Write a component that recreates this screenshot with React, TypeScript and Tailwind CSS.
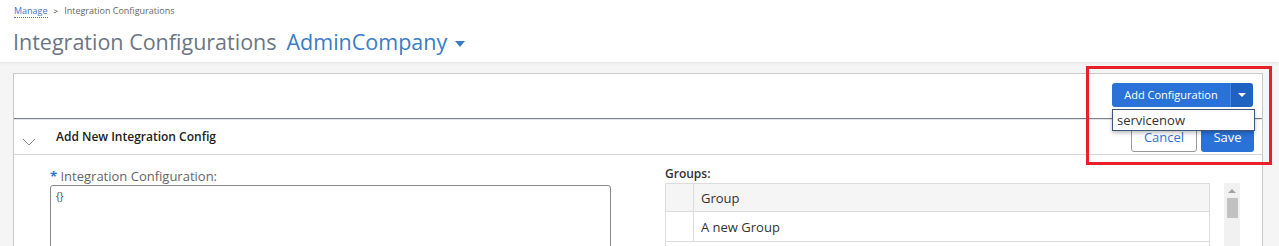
const font = { fontFamily: '"Open Sans", "Liberation Sans", sans-serif' };

const SplitButton = () => {
  return (
    <div className="relative">
      <div className="flex h-[24px] rounded-[3px] overflow-hidden">
        <button className="bg-[#2a72d8] text-white text-[11px] w-[118px] leading-[24px]">
          Add Configuration
        </button>
        <button className="bg-[#1f62c1] w-[23px] flex items-center justify-center border-l border-[#4a86dc]">
          <span className="w-0 h-0 border-l-[4px] border-r-[4px] border-t-[4px] border-l-transparent border-r-transparent border-t-white" />
        </button>
      </div>
      <div className="absolute left-0 top-[26px] w-[143px] h-[22px] bg-white border border-[#3d5778] shadow-[0_2px_4px_rgba(0,0,0,0.25)] text-[13px] text-[#333] pl-[4px] leading-[20px] z-10">
        servicenow
      </div>
    </div>
  );
};

const App = () => {
  return (
    <div className="w-[1279px] h-[246px] overflow-hidden bg-white relative" style={font}>
      <header className="h-[62px] px-[14px] pt-[4px] bg-white shadow-[0_1px_3px_rgba(0,0,0,0.08)] relative z-[1]">
        <div className="flex items-center gap-[6px] text-[9px] h-[14px]">
          <a className="text-[#4a73c9] border-b border-dotted border-[#4a73c9] leading-[12px]">Manage</a>
          <span className="text-[#222] text-[8px]">&gt;</span>
          <span className="text-[#666]">Integration Configurations</span>
        </div>
        <div className="flex items-center mt-[11px] h-[26px]">
          <h1 className="text-[21.5px] text-[#6c7683] leading-[26px] -ml-[1px]">Integration Configurations</h1>
          <span className="text-[21.5px] text-[#3a7cc6] leading-[26px] ml-[10px]">AdminCompany</span>
          <span className="ml-[8px] mt-[4px] w-0 h-0 border-l-[5px] border-r-[5px] border-t-[6px] border-l-transparent border-r-transparent border-t-[#3a7cc6]" />
        </div>
      </header>

      <main className="bg-[#f5f5f5] h-[184px] pl-[13px] pr-[16px] pt-[11px]">
        <div className="bg-white border border-[#c9c9c9] h-[200px]">
          <div className="h-[45px] flex justify-end pt-[9px] pr-[9px] border-b border-[#76828f]">
            <SplitButton />
          </div>
          <div className="h-[36px] flex items-center border-b border-[#d6d6d6] border-t border-t-[#e4e4e4] pr-[8px]">
            <svg className="ml-[8px] mt-[10px]" width="14" height="8" viewBox="0 0 14 8" fill="none">
              <path d="M1 1 L7 7 L13 1" stroke="#8a8a8a" strokeWidth="1" />
            </svg>
            <span className="ml-[20px] text-[12px] font-semibold text-[#222]">Add New Integration Config</span>
            <div className="ml-auto flex gap-[4px] mt-[2px]">
              <button className="h-[28px] w-[66px] border border-[#999] rounded-[3px] text-[13px] text-[#2a72d8] bg-white">
                Cancel
              </button>
              <button className="h-[28px] w-[53px] rounded-[3px] text-[13px] text-white bg-[#2a72d8]">Save</button>
            </div>
          </div>
          <div className="flex pt-[13px]">
            <div className="ml-[36px] w-[561px]">
              <label className="block text-[13px] text-[#666] leading-[16px]">
                <span className="text-[#2a72d8] font-bold">*</span> Integration Configuration:
              </label>
              <div className="mt-[1px] h-[80px] border border-[#8a8a8a] rounded-[3px] px-[5px] pt-[3px] text-[10px] text-[#444]">
                {'{}'}
              </div>
            </div>
            <div className="ml-[54px] flex flex-col -mt-[2px]">
              <span className="text-[12px] font-semibold text-[#333] leading-[16px]">Groups:</span>
              <div className="flex mt-[1px]">
                <div className="w-[545px] border border-[#dcdcdc] text-[13px] text-[#333]">
                  <div className="flex h-[28px] bg-[#f5f5f5] border-b border-[#dcdcdc]">
                    <div className="w-[28px] border-r border-[#dcdcdc]" />
                    <div className="pl-[7px] leading-[28px]">Group</div>
                  </div>
                  <div className="flex h-[30px] border-b border-[#dcdcdc]">
                    <div className="w-[28px] border-r border-[#dcdcdc]" />
                    <div className="pl-[7px] leading-[30px]">A new Group</div>
                  </div>
                </div>
                <div className="ml-[14px] w-[16px] h-[80px] bg-[#f1f1f1] flex flex-col items-center pt-[6px]">
                  <span className="w-0 h-0 border-l-[4px] border-r-[4px] border-b-[4px] border-l-transparent border-r-transparent border-b-[#a3a3a3]" />
                  <div className="mt-[5px] w-[11px] h-[20px] bg-[#c1c1c1]" />
                </div>
              </div>
            </div>
          </div>
        </div>
      </main>

      <div className="absolute left-[1086px] top-[66px] w-[186px] h-[99px] border-[3px] border-[#e8202a] z-20 pointer-events-none" />
    </div>
  );
};

export default App;
